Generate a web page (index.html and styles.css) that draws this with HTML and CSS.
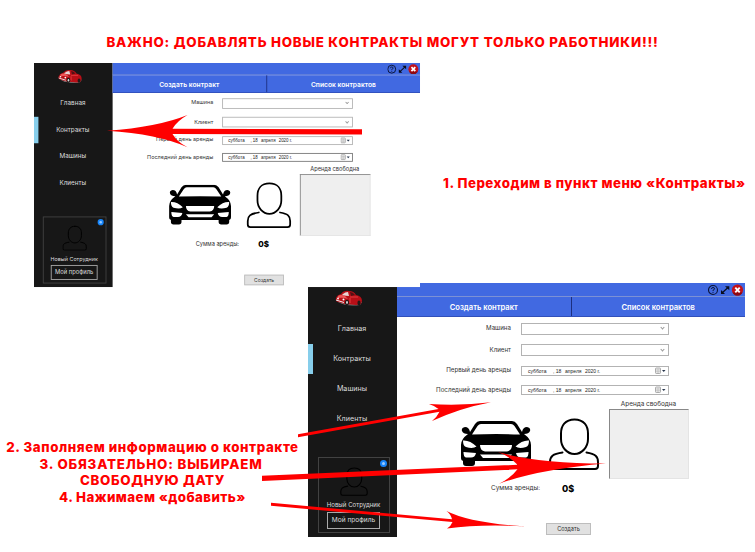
FILE: index.html
```
<!DOCTYPE html>
<html lang="ru">
<head>
<meta charset="utf-8">
<title>Контракты</title>
<link rel="stylesheet" href="styles.css">
</head>
<body>
<svg class="defs" aria-hidden="true">
  <symbol id="beetle" viewBox="0 0 28 17">
    <path d="M3 12 Q12 17 25 15 L27 12 L14 10Z" fill="#777"/>
    <path d="M1 8 Q2 5 6 4 Q9 0 14 1 Q19 1 21 5 Q27 6 27 11 L26 14 Q24 15 21 15 L10 14 L3 12 Q0 11 1 8Z" fill="#b80f17"/>
    <path d="M3 6 Q6 4 10 6 L13 9 Q8 7 3 8Z" fill="#ef5557"/>
    <path d="M8 4 Q10 2 13 2 L14 6 Q11 6 7 5Z" fill="#e9d5d5"/>
    <path d="M15 2 Q18 2 20 5 L16 6Z" fill="#541014"/>
    <path d="M15 7 L23 7 M15 8 V13" stroke="#ee4a4d" stroke-width=".8"/>
    <ellipse cx="12" cy="12.5" rx="2" ry="2.8" fill="#241818"/><ellipse cx="12" cy="12.5" rx=".9" ry="1.4" fill="#ddd"/>
    <ellipse cx="24" cy="13" rx="1.6" ry="2.4" fill="#241818"/>
    <path d="M1 10 L9 12.5" stroke="#eee" stroke-width="1"/>
    <circle cx="3" cy="8.5" r=".9" fill="#fff"/><circle cx="8.5" cy="9.5" r="1" fill="#fff"/>
  </symbol>
  <symbol id="person" viewBox="0 0 51 52">
    <path d="M26 1.5 C16.500 1.500 12.500 8 12.500 15.500 V21 C12.500 29 18.500 36 26 36 C33.500 36 39.500 29 39.500 21 V15.500 C39.500 8 35.500 1.500 26 1.500Z M14 34.500 C4 36 1.500 38.500 1.500 44 V48 Q1.500 51 4.500 51 H46.500 Q49.500 51 49.500 48 V44 C49.500 38.500 47 36 38 34.500" fill="none" stroke="currentColor" stroke-width="2" stroke-linecap="round"/>
  </symbol>
  <symbol id="car" viewBox="0 0 72 46">
    <path d="M3 35 H15 V42 Q15 45 12 45 H6 Q3 45 3 42Z M57 35 H69 V42 Q69 45 66 45 H60 Q57 45 57 42Z"/>
    <path d="M20 0 H52 Q55 0 57 3 L62 11 Q63 6 67 6 Q71 7 70 10 Q69 13 64 13 Q71 18 71 24 V37 Q71 40 68 40 H4 Q1 40 1 37 V24 Q1 18 8 13 Q3 13 2 10 Q1 7 5 6 Q9 6 10 11 L15 3 Q17 0 20 0Z"/>
    <g fill="#fff">
      <path d="M21 3 H51 Q53 3 54.500 5 L60 13.500 Q48 13 36 13 Q24 13 12 13.500 L17.500 5 Q19 3 21 3Z"/>
      <path d="M3 19.500 Q10 19 16.500 25.500 Q13 28 6 26 Q3 25 3 19.500Z M69 19.500 Q62 19 55.500 25.500 Q59 28 66 26 Q69 25 69 19.500Z"/>
      <path d="M20 24 H52 Q52 29.500 47 30.500 H25 Q20 29.500 20 24Z"/>
      <path d="M3.500 31 L16 32 Q15 36.500 11 36.500 H6 Q3.500 36 3.500 31Z M68.500 31 L56 32 Q57 36.500 61 36.500 H66 Q68.500 36 68.500 31Z"/>
      <path d="M20 33.500 H52 L49 37 H23Z"/>
    </g>
  </symbol>
  <symbol id="controls" viewBox="0 0 36 12">
    <circle cx="5" cy="6" r="4.500" fill="none" stroke="#0b1538" stroke-width="1.100"/>
    <path d="M3.500 5 Q3.500 3.500 5 3.500 Q6.600 3.500 6.500 4.900 Q6.400 5.800 5 6.300 V7.100 M5 8 V8.900" fill="none" stroke="#0b1538" stroke-width="1"/>
    <path d="M14 9 L20 3.500" stroke="#080c1c" stroke-width="1.200"/>
    <path d="M17 2.200 H21.300 V6.200Z M13 6 V10 H17Z" fill="#080c1c"/>
    <circle cx="29.500" cy="6" r="5.600" fill="#c3121a"/>
    <path d="M24.500 8.500 A5.600 5.600 0 0 0 34.500 8.500Z" fill="#8c0910"/>
    <path d="M27.300 3.700 L31.700 8.300 M31.700 3.700 L27.300 8.300" stroke="#fff" stroke-width="1.900"/>
  </symbol>
  <symbol id="calendar" viewBox="0 0 12 8">
    <rect x=".5" y="1" width="5" height="5.500" rx=".8" fill="#eee" stroke="#999" stroke-width=".8"/>
    <path d="M1 3 H5 M1 4.700 H5 M3 2 V6" stroke="#aaa" stroke-width=".5"/>
    <path d="M7 3 H10.500 L8.750 5Z" fill="#28364d"/>
  </symbol>
</svg>

<main class="board">
  <h1 class="title">ВАЖНО: ДОБАВЛЯТЬ НОВЫЕ КОНТРАКТЫ МОГУТ ТОЛЬКО РАБОТНИКИ!!!</h1>

  <section class="window window-large">
    <aside class="sidebar">
      <svg class="logo"><use href="#beetle"/></svg>
      <nav class="menu">
        <span class="item">Главная</span>
        <span class="item active">Контракты</span>
        <span class="item">Машины</span>
        <span class="item">Клиенты</span>
      </nav>
      <div class="profile">
        <i class="gear"></i>
        <svg class="avatar"><use href="#person"/></svg>
        <span class="name">Новый Сотрудник</span>
        <span class="profile-button">Мой профиль</span>
      </div>
    </aside>
    <div class="content">
      <div class="titlebar"><svg class="controls"><use href="#controls"/></svg></div>
      <div class="tabs"><span class="tab">Создать контракт</span><span class="tab">Список контрактов</span></div>
      <div class="form">
        <label>Машина</label><div class="field select"><i></i></div>
        <label>Клиент</label><div class="field select"><i></i></div>
        <label>Первый день аренды</label><div class="field date"><span>суббота</span><span>, 18</span><span>апреля</span><span>2020 г.</span><svg><use href="#calendar"/></svg></div>
        <label>Последний день аренды</label><div class="field date"><span>суббота</span><span>, 18</span><span>апреля</span><span>2020 г.</span><svg><use href="#calendar"/></svg></div>
      </div>
      <div class="summary">
        <svg class="car"><use href="#car"/></svg>
        <svg class="client"><use href="#person"/></svg>
        <div class="rent"><span>Аренда свободна</span><div class="rent-list"></div></div>
      </div>
      <div class="total"><span>Сумма аренды:</span><b>0$</b></div>
      <span class="create">Создать</span>
    </div>
  </section>

  <section class="window window-small">
    <aside class="sidebar">
      <svg class="logo"><use href="#beetle"/></svg>
      <nav class="menu">
        <span class="item">Главная</span>
        <span class="item active">Контракты</span>
        <span class="item">Машины</span>
        <span class="item">Клиенты</span>
      </nav>
      <div class="profile">
        <i class="gear"></i>
        <svg class="avatar"><use href="#person"/></svg>
        <span class="name">Новый Сотрудник</span>
        <span class="profile-button">Мой профиль</span>
      </div>
    </aside>
    <div class="content">
      <div class="titlebar"><svg class="controls"><use href="#controls"/></svg></div>
      <div class="tabs"><span class="tab">Создать контракт</span><span class="tab">Список контрактов</span></div>
      <div class="form">
        <label>Машина</label><div class="field select"><i></i></div>
        <label>Клиент</label><div class="field select"><i></i></div>
        <label>Первый день аренды</label><div class="field date"><span>суббота</span><span>, 18</span><span>апреля</span><span>2020 г.</span><svg><use href="#calendar"/></svg></div>
        <label>Последний день аренды</label><div class="field date focused"><span>суббота</span><span>, 18</span><span>апреля</span><span>2020 г.</span><svg><use href="#calendar"/></svg></div>
      </div>
      <div class="summary">
        <svg class="car"><use href="#car"/></svg>
        <svg class="client"><use href="#person"/></svg>
        <div class="rent"><span>Аренда свободна</span><div class="rent-list"></div></div>
      </div>
      <div class="total"><span>Сумма аренды:</span><b>0$</b></div>
      <span class="create">Создать</span>
    </div>
  </section>

  <svg class="arrows" viewBox="0 0 755 552">
    <path d="M107 130.800 Q158 127 187.500 115 Q177 121 172.500 128.700 L362 129.300 V134.600 L172.500 134 Q177 142 187.500 147.300 Q158 134 107 130.800Z"/>
    <path d="M298 434.200 L438.500 409 Q434 405.500 429 404 Q462 406 491 402.200 Q460 408 432 421 Q437 417 439.500 411.700 L298 437.200Z"/>
    <path d="M262 475.800 L517.500 464.800 Q509 456 498 452 Q535 463 606 463.500 Q540 469 499 483.700 Q511 478 517.500 469.300 L262 481Z"/>
    <path d="M271 502.800 L452 519.300 Q451 514.500 446.500 511 Q470 523 526 526.500 Q480 524 447 528.600 Q451 526 452.500 522 L271 505.800Z"/>
  </svg>

  <p class="note note-menu">1. Переходим в пункт меню «Контракты»</p>
  <div class="note note-steps">
    <p class="s1">2. Заполняем информацию о контракте</p>
    <p class="s2">3. ОБЯЗАТЕЛЬНО: ВЫБИРАЕМ</p>
    <p class="s3">СВОБОДНУЮ ДАТУ</p>
    <p class="s4">4. Нажимаем «добавить»</p>
  </div>
</main>
</body>
</html>
```
FILE: styles.css
```
* { box-sizing: border-box; }
body { margin: 0; background: #fff; }
.defs { position: absolute; width: 0; height: 0; }
.board {
  position: relative;
  width: 755px;
  height: 552px;
  overflow: hidden;
  font-family: Inter, "Open Sans", sans-serif;
}
.title, .note { color: #f00; font-weight: 800; white-space: nowrap; margin: 0; }
.title { padding: 32px 0 0 10px; font-size: 13.3px; line-height: 20px; letter-spacing: .8px; text-align: center; }
.note { position: absolute; font-size: 13.3px; line-height: 16.7px; text-align: center; }
.note p { margin: 0; }
.note-menu { left: 443px; top: 174.5px; letter-spacing: .51px; }
.note-steps { left: 0; top: 439px; width: 305px; }
.s1 { letter-spacing: .58px; }
.s2 { letter-spacing: .83px; padding-right: 3px; }
.s3 { letter-spacing: .68px; }
.s4 { letter-spacing: .42px; }

.window {
  position: absolute;
  display: flex;
  width: 437px;
  height: 254px;
  background: #fff;
  color: #333;
  font-size: 7px;
  line-height: 10px;
  white-space: nowrap;
  transform-origin: 0 0;
}
.window-large { left: 308px; top: 283px; }
.window-small { left: 34px; top: 63px; transform: scale(.8833, .882); }

.sidebar {
  width: 89px;
  background: #171717;
  color: #ddd;
  display: flex;
  flex-direction: column;
  align-items: center;
}
.logo { width: 28px; height: 17px; margin: 6.5px 8px 7.5px 0; flex: none; }
.menu { width: 100%; }
.item { display: flex; height: 30px; align-items: center; justify-content: center; font-size: 7.2px; border-left: 5.5px solid transparent; padding-right: 6px; }
.item.active { border-color: #87ceeb; }
.profile {
  position: relative;
  width: 72px;
  height: 76px;
  margin: 23px 0 0 2px;
  border: 1px solid #424242;
  display: flex;
  flex-direction: column;
  align-items: center;
}
.gear { position: absolute; right: 2px; top: 2px; width: 7px; height: 7px; border-radius: 50%; border: 2px solid #1684f8; background: #9acbff; }
.avatar { width: 28px; height: 29px; margin-top: 9px; color: #000; flex: none; }
.name { margin-top: 4px; font-size: 6.1px; }
.profile-button { width: 53px; height: 17px; margin-top: 2px; border: 1px solid #aaa; text-align: center; font-size: 6.6px; line-height: 15px; }

.content { flex: 1; display: flex; flex-direction: column; align-items: flex-start; }
.titlebar { width: 100%; height: 14px; background: #4169e1; display: flex; justify-content: flex-end; border-bottom: 1px solid #7c91d5; }
.controls { width: 36px; height: 12px; margin: .5px 1.5px 0 0; }
.tabs { width: 100%; height: 20px; display: flex; background: #4169e1; border-bottom: 1px solid #3150ba; }
.tab { flex: 1; text-align: center; color: #fff; font-weight: 600; font-size: 7.6px; line-height: 21px; }
.tab + .tab { border-left: 1px solid #1c2f80; }

.form {
  display: grid;
  grid-template-columns: 114px 147.5px;
  grid-template-rows: 12px 12px 10px 10px;
  gap: 9.5px 10px;
  padding-top: 5.5px;
  align-items: center;
}
.form label { text-align: right; font-size: 6.2px; margin-top: -1px; }
.field { height: 100%; border: 1px solid #b3b3b3; display: flex; align-items: center; }
.select { justify-content: flex-end; padding-right: 3.5px; }
.select i { width: 3px; height: 3px; border: solid #999; border-width: 0 .8px .8px 0; transform: translateY(-1px) rotate(45deg); }
.date { font: 5px "Liberation Sans", sans-serif; color: #222; padding-left: 6px; }
.date.focused { border-color: #777; }
.date span:nth-child(1) { width: 25px; }
.date span:nth-child(2) { width: 12px; }
.date span:nth-child(3) { width: 20px; }
.date svg { width: 12px; height: 8px; margin-left: auto; margin-right: 1px; }

.summary { display: flex; align-items: flex-start; padding-left: 63px; }
.car { width: 72px; height: 46px; margin-top: 26px; }
.client { width: 52px; height: 52px; margin: 22.5px 0 0 15.5px; color: #000; }
.rent { width: 80px; margin-left: 9px; padding-top: 4px; text-align: center; font-size: 6.4px; }
.rent-list { height: 70px; background: #efefef; border: 1px solid #e4e4e4; border-top-color: #888; border-left-color: #888; }
.total { display: flex; height: 12px; margin-top: 3px; padding-left: 94px; align-items: center; font-size: 6.4px; }
.total span { width: 71px; }
.total b { font: 800 9px Inter, sans-serif; color: #000; }
.create { width: 45px; height: 12px; margin: 29px 0 0 149px; border: 1px solid #bdbdbd; background: #e1e1e1; text-align: center; font-size: 5.6px; line-height: 10px; }

.arrows { position: absolute; inset: 0; width: 755px; height: 552px; fill: #f00; }
```
